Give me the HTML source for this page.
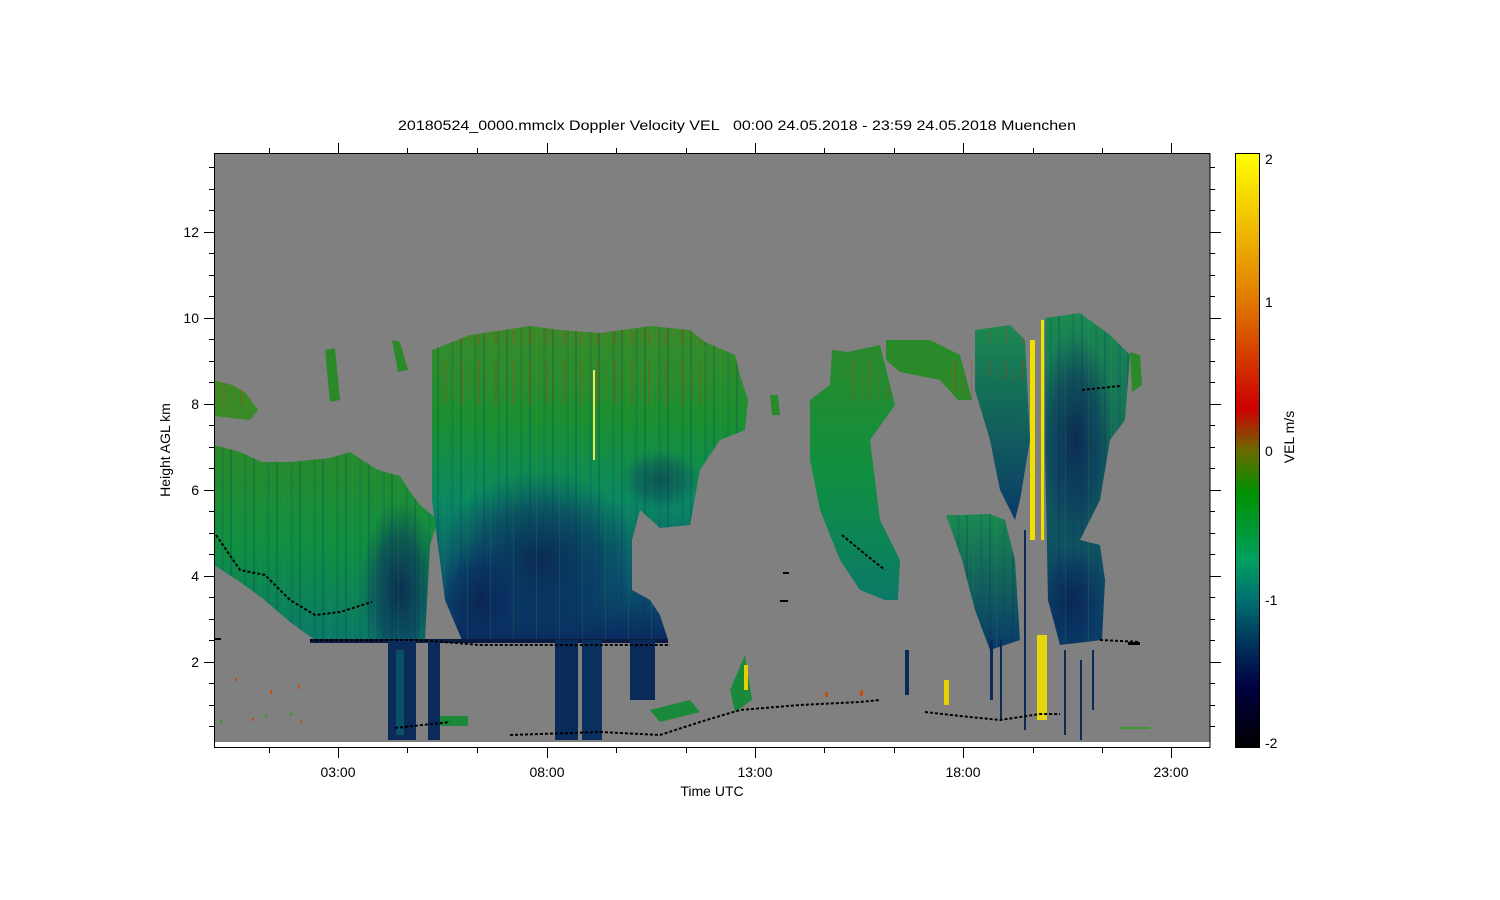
<!DOCTYPE html>
<html><head><meta charset="utf-8"><style>
html,body{margin:0;padding:0;background:#fff;}
svg{display:block;font-family:"Liberation Sans",sans-serif;}
</style></head><body>
<svg width="1500" height="900" viewBox="0 0 1500 900" xmlns="http://www.w3.org/2000/svg">
<defs>
<linearGradient id="cb" x1="0" y1="0" x2="0" y2="1">
<stop offset="0" stop-color="#ffff00"/>
<stop offset="0.25" stop-color="#e07800"/>
<stop offset="0.43" stop-color="#cc0000"/>
<stop offset="0.5" stop-color="#6a6a00"/>
<stop offset="0.57" stop-color="#009000"/>
<stop offset="0.685" stop-color="#00a060"/>
<stop offset="0.75" stop-color="#007070"/>
<stop offset="0.84" stop-color="#002858"/>
<stop offset="0.9" stop-color="#000040"/>
<stop offset="1" stop-color="#000000"/>
</linearGradient>
<linearGradient id="gA" x1="0" y1="0" x2="0" y2="1">
<stop offset="0" stop-color="#3a8a28"/>
<stop offset="0.3" stop-color="#1a9030"/>
<stop offset="0.55" stop-color="#0a8a60"/>
<stop offset="0.8" stop-color="#0a5a70"/>
<stop offset="1" stop-color="#0a2a60"/>
</linearGradient>
<linearGradient id="gB" x1="0" y1="0" x2="0" y2="1">
<stop offset="0" stop-color="#2a8a2a"/>
<stop offset="0.5" stop-color="#109040"/>
<stop offset="1" stop-color="#0a7a68"/>
</linearGradient>
<linearGradient id="gC" x1="0" y1="0" x2="0" y2="1">
<stop offset="0" stop-color="#1a8a50"/>
<stop offset="1" stop-color="#0a3a68"/>
</linearGradient>
<radialGradient id="dk">
<stop offset="0" stop-color="#0a2050" stop-opacity="0.85"/>
<stop offset="0.6" stop-color="#0a2a60" stop-opacity="0.5"/>
<stop offset="1" stop-color="#0a3a60" stop-opacity="0"/>
</radialGradient>
<pattern id="streak" width="23" height="40" patternUnits="userSpaceOnUse">
<rect x="0" y="0" width="2" height="40" fill="#0a2a5a" opacity="0.2"/>
<rect x="7" y="0" width="1" height="40" fill="#30a040" opacity="0.2"/>
<rect x="14" y="0" width="3" height="40" fill="#0a3a5a" opacity="0.12"/>
</pattern>
<pattern id="red" width="17" height="60" patternUnits="userSpaceOnUse">
<rect x="2" y="0" width="2" height="45" fill="#c83010" opacity="0.55"/>
<rect x="11" y="10" width="1" height="30" fill="#d04010" opacity="0.5"/>
</pattern>
<path id="pL" d="M214,445 L240,452 262,462 290,462 330,458 350,452 362,460 378,470 400,476 410,492 420,505 438,520 430,545 425,640 315,640 290,622 262,598 240,582 214,565 Z"/>
<path id="pM" d="M432,350 L470,335 530,326 560,330 600,333 650,326 690,330 705,342 735,355 740,375 748,400 745,430 720,440 700,470 690,525 660,528 640,510 632,540 632,590 650,600 660,615 668,640 462,640 445,600 432,500 Z"/>
<path id="pR" d="M1045,318 L1080,313 1110,335 1130,355 1125,420 1110,440 1100,500 1080,540 1100,545 1105,580 1102,640 1060,645 1048,600 1045,450 Z"/>
<clipPath id="cL"><use href="#pL"/></clipPath>
<clipPath id="cM"><use href="#pM"/></clipPath>
<clipPath id="cR"><use href="#pR"/></clipPath>
</defs>

<text x="737" y="130" font-size="14" text-anchor="middle" textLength="678" lengthAdjust="spacingAndGlyphs">20180524_0000.mmclx Doppler Velocity VEL&#160;&#160; 00:00 24.05.2018 - 23:59 24.05.2018 Muenchen</text>

<rect x="214" y="153" width="996" height="589" fill="#808080"/>

<path d="M214,380 L232,385 245,392 258,410 250,420 214,416 Z" fill="#3a8a28"/>
<path d="M214,380 L232,385 245,392 258,410 250,420 214,416 Z" fill="url(#red)" opacity="0.5"/>
<use href="#pL" fill="url(#gB)"/>
<g clip-path="url(#cL)"><ellipse cx="400" cy="590" rx="40" ry="90" fill="url(#dk)"/></g>
<use href="#pL" fill="url(#streak)"/>
<path d="M325,350 L335,348 340,400 330,402 Z" fill="#2a8a2a"/>
<path d="M392,340 L400,342 408,370 398,372 Z" fill="#2a8a2a"/>

<use href="#pM" fill="url(#gA)"/>
<g clip-path="url(#cM)">
<ellipse cx="540" cy="560" rx="100" ry="90" fill="url(#dk)"/>
<ellipse cx="480" cy="600" rx="45" ry="60" fill="url(#dk)"/>
<ellipse cx="660" cy="480" rx="40" ry="30" fill="url(#dk)" opacity="0.6"/>
</g>
<use href="#pM" fill="url(#streak)"/>
<g clip-path="url(#cM)"><rect x="440" y="330" width="270" height="90" fill="url(#red)" opacity="0.5"/></g>
<rect x="593" y="370" width="2" height="90" fill="#e8e860"/>
<rect x="310" y="639" width="358" height="4" fill="#0a1a40"/>
<rect x="388" y="640" width="28" height="100" fill="#0a2a5a"/>
<rect x="396" y="650" width="8" height="85" fill="#0a6a70" opacity="0.6"/>
<rect x="428" y="640" width="12" height="100" fill="#0a2a5a"/>
<rect x="555" y="640" width="23" height="100" fill="#0a2a5a"/>
<rect x="582" y="640" width="20" height="100" fill="#0a3060"/>
<rect x="630" y="640" width="25" height="60" fill="#0a2a5a"/>
<rect x="440" y="716" width="28" height="10" fill="#1a8a3a"/>
<path d="M650,710 L690,700 700,712 660,722 Z" fill="#1a8a3a"/>
<path d="M730,690 L745,655 752,700 735,712 Z" fill="#1a8a3a"/>
<rect x="744" y="665" width="4" height="25" fill="#e8d000"/>
<g fill="#c05010"><rect x="235" y="678" width="2" height="3"/><rect x="270" y="690" width="2" height="4"/><rect x="298" y="685" width="2" height="4"/><rect x="300" y="720" width="2" height="3"/><rect x="252" y="718" width="2" height="3"/><rect x="860" y="690" width="3" height="6"/><rect x="825" y="692" width="3" height="5"/></g>
<g fill="#3a9a30"><rect x="220" y="720" width="2" height="3"/><rect x="265" y="715" width="2" height="3"/><rect x="290" y="713" width="2" height="3"/><rect x="1120" y="727" width="30" height="2"/></g>

<path d="M810,400 L830,385 832,350 848,352 880,345 895,405 870,440 880,520 900,560 898,600 885,600 860,590 840,560 820,510 810,460 Z" fill="url(#gB)"/>
<path d="M838,355 L880,350 890,400 850,400 Z" fill="url(#red)" opacity="0.5"/>
<path d="M886,340 L930,340 960,355 972,400 958,400 940,380 900,372 886,360 Z" fill="#2a8a2a"/>
<path d="M940,360 L972,360 972,400 950,390 Z" fill="url(#red)" opacity="0.6"/>
<path d="M770,395 L778,395 780,415 772,415 Z" fill="#2a8a2a"/>
<path d="M975,330 L1010,325 1025,340 1030,440 1020,500 1015,520 1000,490 990,440 975,390 Z" fill="url(#gC)"/>
<path d="M975,330 L1010,325 1025,340 1030,380 990,380 Z" fill="url(#red)" opacity="0.5"/>
<path d="M946,515 L960,515 990,514 1005,520 1015,560 1020,640 990,650 975,610 962,560 Z" fill="url(#gC)"/>
<path d="M946,515 L960,515 990,514 1005,520 1015,560 1020,640 990,650 975,610 962,560 Z" fill="url(#streak)"/>
<use href="#pR" fill="url(#gC)"/>
<g clip-path="url(#cR)">
<ellipse cx="1075" cy="440" rx="40" ry="110" fill="url(#dk)"/>
<ellipse cx="1072" cy="600" rx="35" ry="55" fill="url(#dk)"/>
</g>
<use href="#pR" fill="url(#streak)"/>
<path d="M1130,352 L1140,355 1142,385 1132,392 Z" fill="#2a8a2a"/>
<rect x="1030" y="340" width="5" height="200" fill="#f0e000"/>
<rect x="1041" y="320" width="3" height="220" fill="#f0e000"/>
<rect x="1037" y="635" width="10" height="85" fill="#f0e000" opacity="0.9"/>
<g fill="#0a2a5a"><rect x="1024" y="530" width="2" height="200"/><rect x="1064" y="650" width="2" height="85"/><rect x="1080" y="660" width="2" height="80"/><rect x="1092" y="650" width="2" height="60"/><rect x="990" y="640" width="3" height="60"/><rect x="1000" y="640" width="2" height="80"/></g>
<rect x="944" y="680" width="5" height="25" fill="#e8d000"/>
<rect x="905" y="650" width="4" height="45" fill="#0a2a5a"/>

<g fill="none" stroke="#000" stroke-width="2" stroke-dasharray="3 2">
<path d="M216,535 L240,570 265,575 290,600 315,615 340,612 372,602"/>
<path d="M310,640 L420,640 L480,645 L560,645 L670,645"/>
<path d="M395,728 L450,722"/>
<path d="M510,735 L600,732 L660,735 L700,722 L740,710 L800,705 L860,702 L880,700"/>
<path d="M925,712 L960,716 L1000,720 L1040,714 L1060,714"/>
<path d="M1100,640 L1140,642"/>
<path d="M842,535 L860,550 L885,570"/>
<path d="M1082,390 L1120,386"/>
</g>
<g fill="#000">
<rect x="215" y="638" width="6" height="2"/><rect x="1128" y="642" width="12" height="3"/>
<rect x="780" y="600" width="8" height="2"/><rect x="783" y="572" width="6" height="2"/>
</g>
<rect x="214" y="742" width="996" height="5" fill="#fff"/>

<rect x="214.5" y="153.5" width="995.5" height="594" fill="none" stroke="#000" stroke-width="1"/>

<g stroke="#000" stroke-width="1">
<path d="M204,662.5H214 M204,576.5H214 M204,490.5H214 M204,404.5H214 M204,318.5H214 M204,232.5H214
M209,726.5H214 M209,705.5H214 M209,683.5H214 M209,640.5H214 M209,619.5H214 M209,597.5H214 M209,554.5H214 M209,533.5H214 M209,511.5H214 M209,468.5H214 M209,447.5H214 M209,425.5H214 M209,382.5H214 M209,361.5H214 M209,339.5H214 M209,296.5H214 M209,275.5H214 M209,253.5H214 M209,210.5H214 M209,189.5H214 M209,167.5H214"/>
<path d="M1210,662.5H1221 M1210,576.5H1221 M1210,490.5H1221 M1210,404.5H1221 M1210,318.5H1221 M1210,232.5H1221
M1210,726.5H1215 M1210,705.5H1215 M1210,683.5H1215 M1210,640.5H1215 M1210,619.5H1215 M1210,597.5H1215 M1210,554.5H1215 M1210,533.5H1215 M1210,511.5H1215 M1210,468.5H1215 M1210,447.5H1215 M1210,425.5H1215 M1210,382.5H1215 M1210,361.5H1215 M1210,339.5H1215 M1210,296.5H1215 M1210,275.5H1215 M1210,253.5H1215 M1210,210.5H1215 M1210,189.5H1215 M1210,167.5H1215"/>
<path d="M338.5,143V153 M547.5,143V153 M755.5,143V153 M963.5,143V153 M1171.5,143V153
M269.5,148V153 M407.5,148V153 M477.5,148V153 M616.5,148V153 M686.5,148V153 M824.5,148V153 M894.5,148V153 M1033.5,148V153 M1102.5,148V153"/>
<path d="M338.5,748V758 M547.5,748V758 M755.5,748V758 M963.5,748V758 M1171.5,748V758
M269.5,748V753 M407.5,748V753 M477.5,748V753 M616.5,748V753 M686.5,748V753 M824.5,748V753 M894.5,748V753 M1033.5,748V753 M1102.5,748V753"/>
</g>
<g font-size="14" text-anchor="end">
<text x="199" y="667">2</text><text x="199" y="581">4</text><text x="199" y="495">6</text>
<text x="199" y="409">8</text><text x="199" y="323">10</text><text x="199" y="237">12</text>
</g>
<g font-size="14" text-anchor="middle">
<text x="338" y="777">03:00</text><text x="547" y="777">08:00</text><text x="755" y="777">13:00</text>
<text x="963" y="777">18:00</text><text x="1171" y="777">23:00</text>
<text x="712" y="796">Time UTC</text>
</g>
<text transform="translate(170,450) rotate(-90)" font-size="14" text-anchor="middle">Height AGL km</text>

<rect x="1235.5" y="153.5" width="24" height="594" fill="url(#cb)" stroke="#000" stroke-width="1"/>
<g font-size="14">
<text x="1265" y="164">2</text><text x="1265" y="307">1</text><text x="1265" y="456">0</text>
<text x="1265" y="605">-1</text><text x="1265" y="748">-2</text>
</g>
<text transform="translate(1294,437) rotate(-90)" font-size="14" text-anchor="middle">VEL m/s</text>
</svg>
</body></html>
